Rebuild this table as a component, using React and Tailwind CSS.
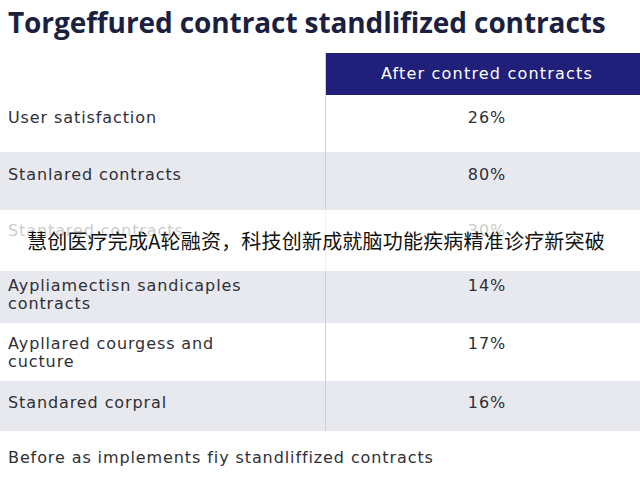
const rows = [
  { label: ["User satisfaction"], value: "26%", h: "h-[57px] pt-[14px]", bg: "bg-white" },
  { label: ["Stanlared contracts"], value: "80%", h: "h-[58px] pt-[14px]", bg: "bg-[#e8e9ee]" },
  { label: ["Stantared contracts"], value: "30%", h: "h-[61px] pt-[12px]", bg: "bg-white" },
  { label: ["Aypliamectisn sandicaples", "contracts"], value: "14%", h: "h-[52px] pt-[6px]", bg: "bg-[#e8e9ee]" },
  { label: ["Aypllared courgess and", "cucture"], value: "17%", h: "h-[58px] pt-[12px]", bg: "bg-white" },
  { label: ["Standared corpral"], value: "16%", h: "h-[50px] pt-[13px]", bg: "bg-[#e8e9ee]" },
];

export default function App() {
  return (
    <div className="relative w-[640px] h-[480px] overflow-hidden bg-white font-['DejaVu_Sans',sans-serif] text-[#2e2f36]">
      <h1 className="pl-2 pt-[4px] h-[53px] font-['Open_Sans',sans-serif] text-[28px] font-bold leading-[36px] tracking-[-0.1px] text-[#1b1f40]">
        Torgeffured contract standlifized contracts
      </h1>

      <div className="grid grid-cols-[326px_1fr]">
        <div className="h-[42px] border-r border-[#cfd0d4]"></div>
        <div className="h-[42px] bg-[#20207a] flex items-center justify-center pl-2 text-[16px] tracking-[1.2px] text-white">
          After contred contracts
        </div>

        {rows.map((r, i) => (
          <div key={i} className="contents">
            <div className={`${r.h} ${r.bg} border-r border-[#cfd0d4] pl-2 flex flex-col text-[16px] tracking-[0.9px] leading-[18px]`}>
              {r.label.map((l) => (
                <span key={l}>{l}</span>
              ))}
            </div>
            <div className={`${r.h} ${r.bg} flex items-start justify-center pl-2 text-[16px] tracking-[0.9px] leading-[18px]`}>
              {r.value}
            </div>
          </div>
        ))}
      </div>

      <p className="pl-2 pt-[18px] text-[16px] tracking-[0.9px] leading-[18px]">
        Before as implements fiy standliffized contracts
      </p>

      <div className="absolute left-0 top-[210px] w-full h-[61px] bg-white/75 flex items-center pl-[27px]">
        <span className="text-[20px] tracking-[0.2px] text-[#111] font-['Noto_Sans_CJK_SC','Noto_Sans',sans-serif]">
          慧创医疗完成A轮融资，科技创新成就脑功能疾病精准诊疗新突破
        </span>
      </div>
    </div>
  );
}
